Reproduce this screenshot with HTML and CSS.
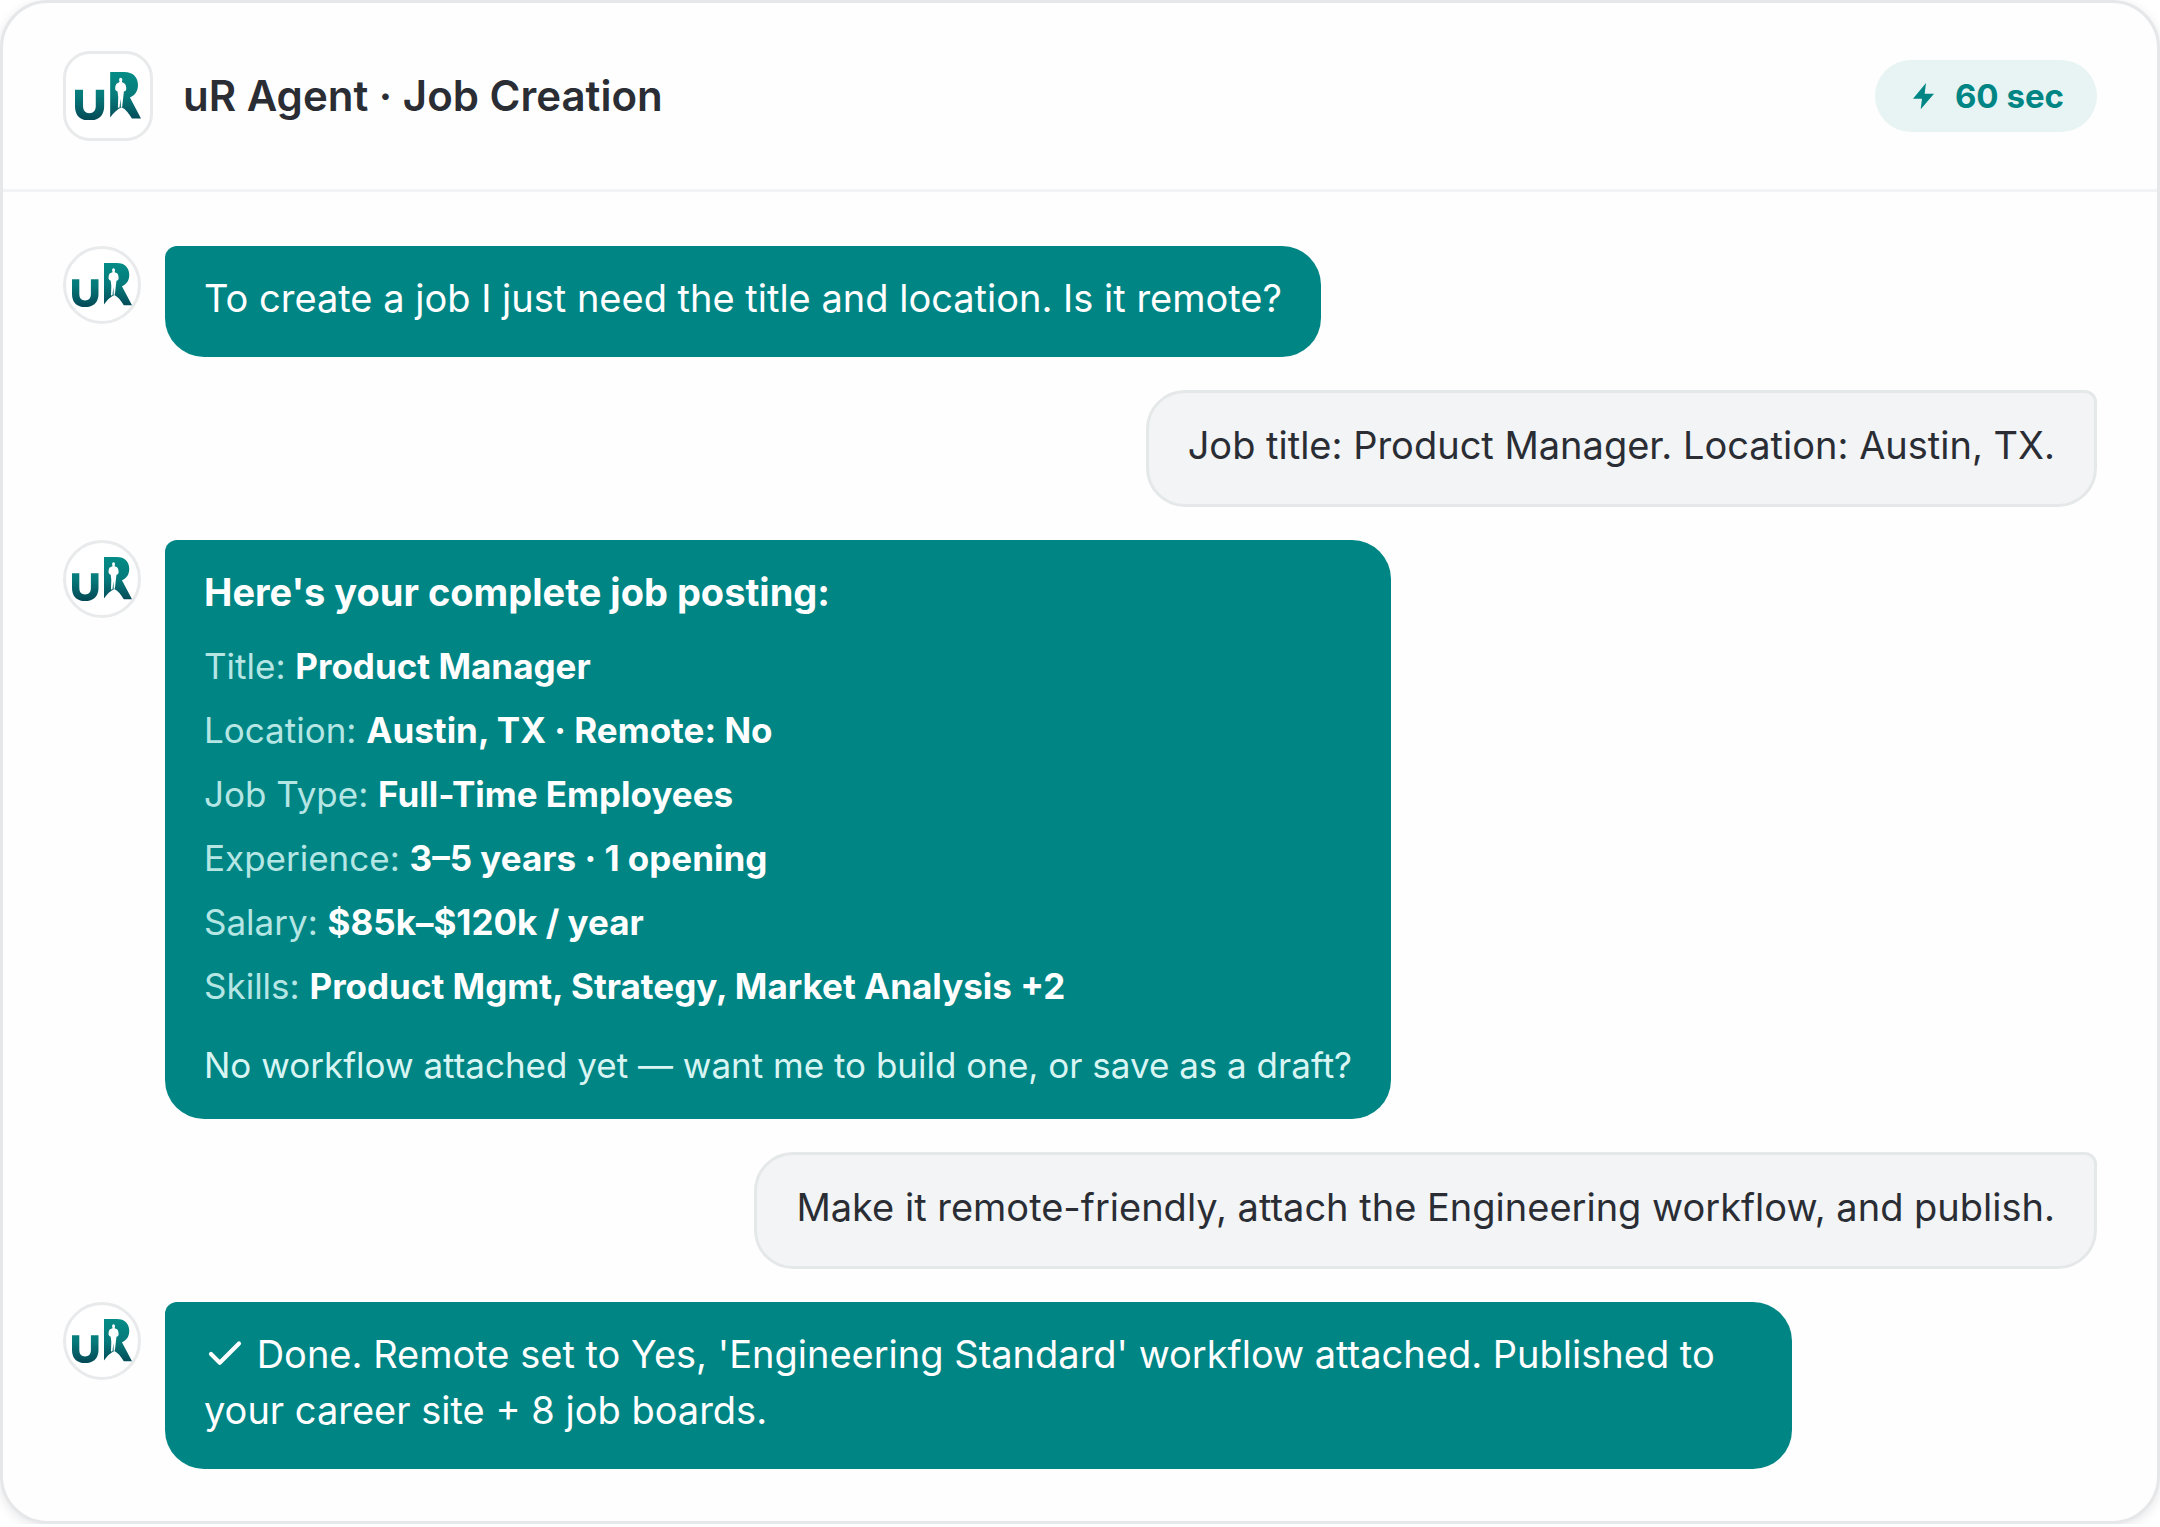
FILE: index.html
```html
<!DOCTYPE html>
<html lang="en">
<head>
    <meta charset="UTF-8">
    <meta name="viewport" content="width=device-width, initial-scale=1.0">
    <title>uR Agent · Job Creation</title>

    <link rel="stylesheet" href="styles.css">
</head>
<body>
    <!-- logo shared by the header and the avatars -->
    <svg class="sprite" aria-hidden="true">
        <defs>
            <linearGradient id="logo-fill" gradientUnits="userSpaceOnUse" x1="0" y1="97" x2="0" y2="242">
                <stop offset="0" stop-color="#048c86"/>
                <stop offset="0.5" stop-color="#067a7a"/>
                <stop offset="1" stop-color="#034855"/>
            </linearGradient>
        </defs>
        <symbol id="logo" viewBox="75 97 197 145">
            <path fill="url(#logo-fill)" d="M75 150h24v48c0 15 7 22 19 22s19-7 19-22v-48h25v49c0 28-17 43-44 43s-43-15-43-43z"/>
            <path fill="url(#logo-fill)" d="M180 97h42c26 0 41 15 41 39 0 18-9 31-24 37l33 63h-27c-9-16-19-28-31-34-13 6-24 17-34 31z"/>
            <path fill="#fff" d="M211 114c4 0 6 3 5 8l-1 5 8 4c4 4 5 10 5 16 0 5-3 8-7 8l-2 17-3 28-4 3-1-27-3 27-5 1 1-32-2-17c-4-1-7-4-7-8 0-7 1-13 5-16l8-4-1-5c-1-5 1-8 4-8z"/>
        </symbol>
    </svg>

    <div class="card">
        <header class="card-header">
            <div class="brand">
                <svg viewBox="0 0 197 145" role="img" aria-label="uR"><use href="#logo"/></svg>
            </div>
            <h1>uR Agent · Job Creation</h1>
            <div class="pill">
                <svg viewBox="0 0 63 79" aria-hidden="true"><path d="M39 0 0 47h27l-4 32 40-47H35z"/></svg>
                60 sec
            </div>
        </header>

        <main class="chat">
            <div class="message agent">
                <div class="avatar"><svg viewBox="0 0 197 145" aria-hidden="true"><use href="#logo"/></svg></div>
                <div class="bubble">To create a job I just need the title and location. Is it remote?</div>
            </div>

            <div class="message user">
                <div class="bubble">Job title: Product Manager. Location: Austin, TX.</div>
            </div>

            <div class="message agent">
                <div class="avatar"><svg viewBox="0 0 197 145" aria-hidden="true"><use href="#logo"/></svg></div>
                <div class="bubble">
                    <h2>Here's your complete job posting:</h2>
                    <dl class="posting">
                        <div><dt>Title:</dt> <dd>Product Manager</dd></div>
                        <div><dt>Location:</dt> <dd>Austin, TX · Remote: No</dd></div>
                        <div><dt>Job Type:</dt> <dd>Full-Time Employees</dd></div>
                        <div><dt>Experience:</dt> <dd>3–5 years · 1 opening</dd></div>
                        <div><dt>Salary:</dt> <dd>$85k–$120k / year</dd></div>
                        <div><dt>Skills:</dt> <dd>Product Mgmt, Strategy, Market Analysis +2</dd></div>
                    </dl>
                    <p class="note">No workflow attached yet — want me to build one, or save as a draft?</p>
                </div>
            </div>

            <div class="message user">
                <div class="bubble">Make it remote-friendly, attach the Engineering workflow, and publish.</div>
            </div>

            <div class="message agent">
                <div class="avatar"><svg viewBox="0 0 197 145" aria-hidden="true"><use href="#logo"/></svg></div>
                <div class="bubble">
                    <svg class="check" viewBox="0 0 24 24" aria-hidden="true"><path d="M20 6 9 17l-5-5"/></svg>
                    Done. Remote set to Yes, 'Engineering Standard' workflow attached. Published to your career site + 8 job boards.
                </div>
            </div>
        </main>
    </div>
</body>
</html>
```
FILE: styles.css
```css
* {
    box-sizing: border-box;
    margin: 0;
    padding: 0;
}
body {
    background: #fff;
    color: #2a2d34;
    font-family: Inter, "Liberation Sans", sans-serif;
    font-size: 38px;
    line-height: 56px;
}
.sprite {
    position: absolute;
    width: 0;
    height: 0;
}
.card {
    background: #fefefe;
    border: 3px solid #e5e7e9;
    border-radius: 48px;
    box-shadow: 0 3px 12px rgba(0, 0, 0, 0.1);
}

/* header */
.card-header {
    display: flex;
    align-items: center;
    gap: 30px;
    padding: 48px 60px;
    border-bottom: 3px solid #f1f3f4;
}
.brand,
.avatar {
    display: flex;
    flex: none;
    align-items: center;
    justify-content: center;
    background: #fff;
    border: 3px solid #e8eaeb;
}
.brand {
    width: 90px;
    height: 90px;
    border-radius: 27px;
}
.brand svg {
    width: 66px;
}
.card-header h1 {
    font-size: 42px;
    font-weight: 600;
}
.pill {
    display: flex;
    align-items: center;
    gap: 21px;
    margin-left: auto;
    padding: 8px 33px 8px 38px;
    border-radius: 36px;
    background: #e7f4f3;
    color: #008585;
    font-size: 33px;
    font-weight: 700;
}
.pill svg {
    width: 21px;
    fill: currentColor;
}

/* conversation */
.chat {
    display: flex;
    flex-direction: column;
    gap: 33px;
    padding: 54px 60px 52px;
}
.message {
    display: flex;
    align-items: flex-start;
    gap: 24px;
}
.user {
    justify-content: flex-end;
}
.avatar {
    width: 78px;
    height: 78px;
    border-radius: 50%;
}
.avatar svg {
    width: 60px;
}
.bubble {
    max-width: 80%;
    padding: 24px 39px 31px;
    border-radius: 39px;
}
.agent .bubble {
    border-top-left-radius: 12px;
    background: #008585;
    color: #fff;
}
.user .bubble {
    border: 3px solid #e5e8e9;
    border-top-right-radius: 12px;
    background: #f2f4f5;
}
.bubble h2 {
    font-size: 38px;
    font-weight: 700;
}
.posting {
    display: flex;
    flex-direction: column;
    gap: 12px;
    margin-top: 20px;
    font-size: 35px;
    line-height: 52px;
}
.posting dt,
.posting dd {
    display: inline;
}
.posting dt {
    color: #b5e6e4;
}
.posting dd {
    font-weight: 700;
}
.note {
    margin-top: 30px;
    color: #d9f5f3;
    font-size: 35px;
    line-height: 46px;
}
.check {
    width: 42px;
    height: 42px;
    vertical-align: -7px;
    fill: none;
    stroke: currentColor;
    stroke-width: 2.4;
    stroke-linecap: round;
    stroke-linejoin: round;
}
```
